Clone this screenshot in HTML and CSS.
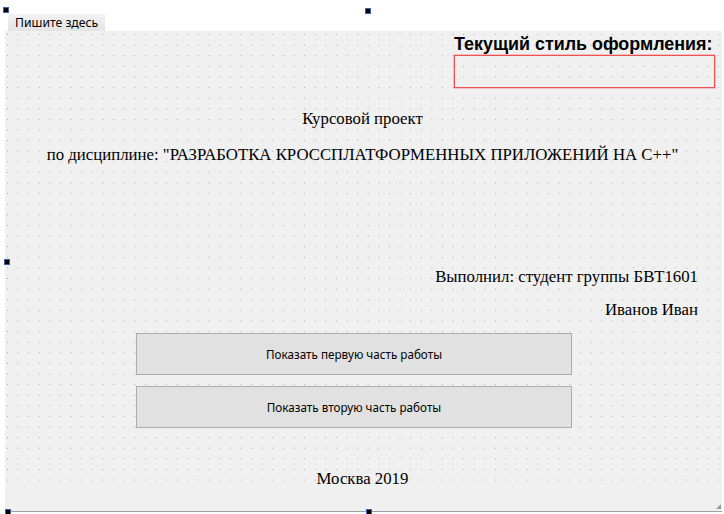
FILE: index.html
```html
<!DOCTYPE html>
<html lang="ru">
<head>
<meta charset="utf-8">
<title>MainWindow</title>
<link rel="stylesheet" href="styles.css">
</head>
<body>
<div class="window">
  <span class="handle h-tl"></span>
  <span class="handle h-tm"></span>
  <span class="handle h-ml"></span>
  <span class="handle h-bl"></span>
  <span class="handle h-bm"></span>

  <div class="menubar">
    <span class="menu-item">Пишите здесь</span>
  </div>

  <div class="central">
    <div class="style-box">
      <div class="style-title">Текущий стиль оформления:</div>
      <div class="style-frame"></div>
    </div>

    <div class="label label-center l-course">Курсовой проект</div>
    <div class="label label-center l-subject">по дисциплине: "РАЗРАБОТКА КРОССПЛАТФОРМЕННЫХ ПРИЛОЖЕНИЙ НА С++"</div>

    <div class="label label-right l-author">Выполнил: студент группы БВТ1601</div>
    <div class="label label-right l-name">Иванов Иван</div>

    <button class="push b-first" type="button">Показать первую часть работы</button>
    <button class="push b-second" type="button">Показать вторую часть работы</button>

    <div class="label label-center l-city">Москва 2019</div>
  </div>

  <div class="statusbar">
    <span class="grip"></span>
  </div>
</div>
</body>
</html>
```

FILE: styles.css
```css
html, body {
  margin: 0;
  padding: 0;
  background: #ffffff;
}

body {
  width: 724px;
  height: 514px;
  overflow: hidden;
  font-family: "Noto Sans", "Open Sans", sans-serif;
}

/* Form being edited */
.window {
  position: relative;
  margin: 8px 0 0 5px;
  width: 717px;
  height: 503px;
  display: flex;
  flex-direction: column;
  background: #f0f0f0;
  border-bottom: 1px solid #a0a0a0;
}

/* Selection handles */
.handle {
  position: absolute;
  width: 4px;
  height: 4px;
  background: #000;
  border: 1px solid #3a5fb0;
  z-index: 3;
}
.h-tl { left: -2px; top: -1px; }
.h-tm { left: 360px; top: 0; }
.h-ml { left: -1px; top: 251px; }
.h-bl { left: 0; top: 501px; }
.h-bm { left: 361px; top: 501px; }

/* Menu bar */
.menubar {
  height: 24px;
  background: #ffffff;
  display: flex;
  align-items: flex-start;
  padding-left: 3px;
}
.menu-item {
  margin-top: 6px;
  height: 17px;
  width: 97px;
  box-sizing: border-box;
  padding-left: 7px;
  background: linear-gradient(#f2f2f2, #e4e4e4);
  font-size: 12.2px;
  line-height: 17px;
  color: #000;
}

/* Central widget with the designer grid */
.central {
  flex: 1;
  display: flex;
  flex-direction: column;
  background-color: #f0f0f0;
  background-image:
    linear-gradient(to right, transparent 1px, #f0f0f0 1px),
    linear-gradient(to bottom, #a9a9a9 1px, #f0f0f0 1px);
  background-size: 10.62px 10.62px;
  background-position: 2px 3px;
  font-family: "Liberation Serif", "Times New Roman", serif;
  color: #000;
}

.style-box {
  align-self: flex-end;
  margin: 3px 7px 0 0;
  width: 261px;
}
.style-title {
  font-family: "Liberation Sans", Arial, sans-serif;
  font-weight: bold;
  font-size: 17.9px;
  line-height: 21px;
  white-space: nowrap;
}
/* Empty frame outlined in red (QFrame with a red stylesheet border) */
.style-frame {
  height: 33px;
  box-sizing: border-box;
  border: 1px solid rgb(240, 80, 80);
  box-shadow: 0 0 0 0.5px rgba(240, 80, 80, 0.6);
  background: transparent;
}

.label {
  font-size: 16.8px;
  line-height: 20px;
  white-space: nowrap;
}
.label-center { text-align: center; padding-right: 2px; }
.label-right { text-align: right; padding-right: 24px; }

.l-course { margin-top: 21px; }
.l-subject { margin-top: 16px; }
.l-author { margin-top: 102px; }
.l-name { margin-top: 13px; }
.l-city { margin-top: 41px; }

.push {
  margin-left: 131px;
  width: 436px;
  height: 42px;
  box-sizing: border-box;
  background: #e1e1e1;
  border: 1px solid #adadad;
  border-radius: 0;
  font-family: "Noto Sans", "Open Sans", sans-serif;
  font-size: 11.7px;
  color: #000;
  padding: 0;
}
.b-first { margin-top: 13px; }
.b-second { margin-top: 11px; }

/* Status bar */
.statusbar {
  height: 23px;
  position: relative;
  background: #f0f0f0;
}
.grip {
  position: absolute;
  right: 1px;
  bottom: 2px;
  width: 5px;
  height: 5px;
  background:
    radial-gradient(circle, #9a9a9a 0.8px, transparent 1px) 0 0 / 2px 2px;
  clip-path: polygon(100% 0, 100% 100%, 0 100%);
}
```
